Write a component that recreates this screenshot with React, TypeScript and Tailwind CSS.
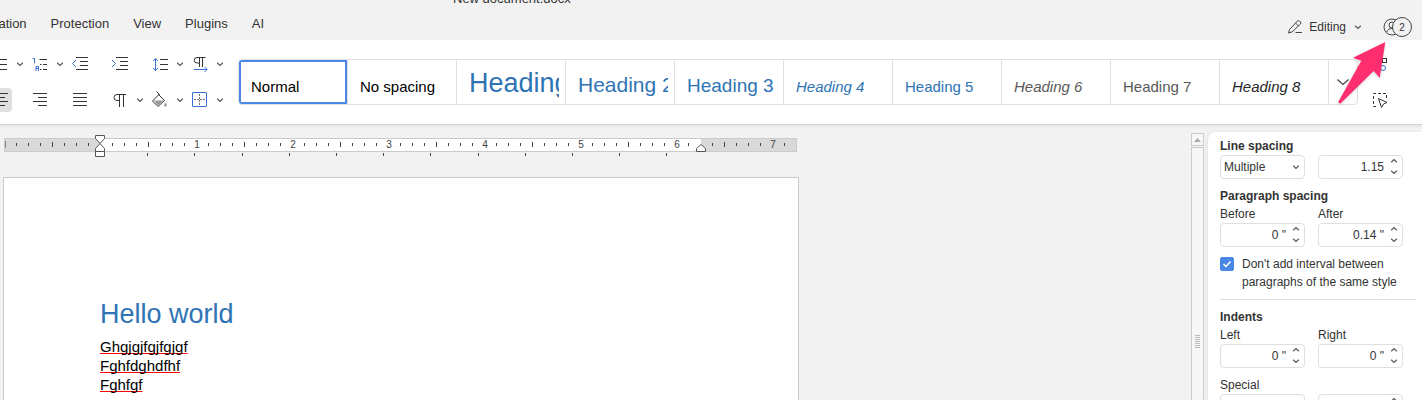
import { useState } from "react";

const TABS = ["Collaboration", "Protection", "View", "Plugins", "AI"];

const STYLES = [
  { name: "Normal", className: "text-[15px] text-black" },
  { name: "No spacing", className: "text-[15px] text-black" },
  { name: "Heading 1", className: "text-[27px] text-[#2e74b5]" },
  { name: "Heading 2", className: "text-[21px] text-[#2e74b5]" },
  { name: "Heading 3", className: "text-[19px] text-[#2e74b5]" },
  { name: "Heading 4", className: "text-[15px] text-[#2e74b5] italic" },
  { name: "Heading 5", className: "text-[15px] text-[#2e74b5]" },
  { name: "Heading 6", className: "text-[15px] text-[#595959] italic" },
  { name: "Heading 7", className: "text-[15px] text-[#595959]" },
  { name: "Heading 8", className: "text-[15px] text-[#272727] italic" },
];

const DARK = "#333";
const BLUE = "#3b6fd1";

const Chevron = ({ up = false }: { up?: boolean }) => (
  <svg width="8" height="6" viewBox="0 0 8 6" fill="none" stroke="#555" strokeWidth="1.2">
    <path d={up ? "M1.2 4.2 4 1.6l2.8 2.6" : "M1.2 1.8 4 4.4l2.8-2.6"} />
  </svg>
);

const Icon = ({ children }: { children: React.ReactNode }) => (
  <svg width="20" height="20" viewBox="0 0 20 20" fill="none" stroke={DARK}>
    {children}
  </svg>
);

const ToolButton = ({
  label,
  active = false,
  className = "",
  children,
}: {
  label: string;
  active?: boolean;
  className?: string;
  children: React.ReactNode;
}) => (
  <button
    aria-label={label}
    className={`flex h-6 items-center justify-center rounded-sm ${active ? "bg-[#e0e0e0]" : ""} ${className}`}
  >
    {children}
  </button>
);

const ListTools = () => (
  <div className="-ml-[10px] grid w-60 shrink-0 grid-cols-12 gap-y-3">
    <ToolButton label="Numbering">
      <Icon>
        <path d="M8 5.5h9M8 10.5h9M8 15.5h9" />
      </Icon>
    </ToolButton>
    <ToolButton label="Numbering options">
      <Chevron />
    </ToolButton>
    <ToolButton label="Multilevel list">
      <Icon>
        <path d="M9.5 5.5H17M10 10.5h1.5M13 10.5h4M10 15.5h1.5M13 15.5h4" />
        <path stroke={BLUE} d="M2.5 4.5h2v5M6 17v-4.500h2.500V17M6 14.500h2.500" />
      </Icon>
    </ToolButton>
    <ToolButton label="Multilevel list options">
      <Chevron />
    </ToolButton>
    <ToolButton label="Decrease indent">
      <Icon>
        <path d="M6 3.5h12M10 7.500h8M10 11.500h8M6 15.500h12" />
        <path stroke={BLUE} d="M6 6 2.500 9.500 6 13" />
      </Icon>
    </ToolButton>
    <ToolButton label="Increase indent" className="col-start-7">
      <Icon>
        <path d="M6 3.5h12M10 7.500h8M10 11.500h8M6 15.500h12" />
        <path stroke={BLUE} d="M2 6 5.500 9.500 2 13" />
      </Icon>
    </ToolButton>
    <ToolButton label="Line spacing" className="col-start-9">
      <Icon>
        <path d="M10 5.500h8M10 10.500h8M10 15.500h8" />
        <path stroke={BLUE} d="M5.500 4.500v12M3 7l2.500-2.500L8 7M3 14l2.500 2.500L8 14" />
      </Icon>
    </ToolButton>
    <ToolButton label="Line spacing options">
      <Chevron />
    </ToolButton>
    <ToolButton label="Text direction">
      <Icon>
        <path d="M15.500 3.500H7a2.700 2.700 0 0 0 0 5.500h2.500M9.500 3.500v9.500M12.500 3.500v9.500" />
        <path stroke={BLUE} d="M4 15.500h13M14.500 13l2.500 2.500-2.500 2.500" />
      </Icon>
    </ToolButton>
    <ToolButton label="Text direction options">
      <Chevron />
    </ToolButton>

    <ToolButton label="Align center" active className="col-start-1 w-[22px]">
      <Icon>
        <path d="M3 3.500h14M6 7.500h8M3 11.500h14M6 15.500h8" />
      </Icon>
    </ToolButton>
    <ToolButton label="Align right" className="col-start-3">
      <Icon>
        <path d="M3 3.500h14M8 7.500h9M3 11.500h14M8 15.500h9" />
      </Icon>
    </ToolButton>
    <ToolButton label="Justify" className="col-start-5">
      <Icon>
        <path d="M3 3.500h14M3 7.500h14M3 11.500h14M3 15.500h14" />
      </Icon>
    </ToolButton>
    <ToolButton label="Nonprinting characters" className="col-start-7">
      <Icon>
        <path d="M16 4.500H7a3 3 0 0 0 0 6h2.500M9.500 4.500V17M13.500 4.500V17" />
      </Icon>
    </ToolButton>
    <ToolButton label="Nonprinting options">
      <Chevron />
    </ToolButton>
    <ToolButton label="Shading">
      <Icon>
        <path d="m8.500 4.500 6 6-6.500 6-5.500-5.500 7-7M6.500 1.500l3 3" />
        <path fill="#999" stroke="none" d="M4 10.500h9.500L8 15.800z" />
        <path fill="#999" stroke="none" d="M15.500 12.500c2 2.500 1.500 4 0 4s-2-1.500 0-4z" />
      </Icon>
    </ToolButton>
    <ToolButton label="Shading options">
      <Chevron />
    </ToolButton>
    <ToolButton label="Borders">
      <Icon>
        <path stroke="#777" strokeDasharray="2 1" d="M9.500 4v12M4 9.500h12" />
        <rect x="2.500" y="2.500" width="14" height="14" rx=".5" stroke={BLUE} />
      </Icon>
    </ToolButton>
    <ToolButton label="Borders options">
      <Chevron />
    </ToolButton>
  </div>
);

const StyleGallery = () => {
  const [selected, setSelected] = useState("Normal");

  return (
    <div className="mt-[19px] ml-2 flex h-[46px] min-w-0 flex-1 overflow-hidden rounded border border-[#dfdfdf]">
      {STYLES.map((style) => (
        <button
          key={style.name}
          onClick={() => setSelected(style.name)}
          className={`w-[109px] shrink-0 border-r border-[#dfdfdf] pr-[6px] pl-3 text-left ${
            selected === style.name ? "shadow-[inset_0_0_0_2px_#4a87e7]" : ""
          }`}
        >
          <span className={`flex h-11 items-baseline overflow-hidden whitespace-nowrap ${style.className}`}>
            {/* shared baseline for every preview size */}
            <span className="inline-block h-8 w-0" />
            {style.name}
          </span>
        </button>
      ))}
      <button aria-label="More styles" className="flex flex-1 items-center justify-center">
        <svg width="14" height="8" viewBox="0 0 14 8" fill="none" stroke="#444" strokeWidth="1.2">
          <path d="m1.500 1.500 5.500 5 5.500-5" />
        </svg>
      </button>
    </div>
  );
};

const Header = () => (
  <header className="flex h-10 shrink-0 flex-col text-[#333]">
    <div className="-mt-[10px] ml-[453px] h-5 text-[13px] leading-[18px]">New document.docx</div>
    <div className="flex h-[30px] items-center justify-between">
      <nav className="-ml-[50px] flex gap-6 pb-[2px] text-[13px] leading-5">
        {TABS.map((tab) => (
          <button key={tab}>{tab}</button>
        ))}
      </nav>
      <div className="flex items-center pt-1 pr-[10px] text-xs leading-5">
        <button className="mr-5 flex items-center">
          <svg width="16" height="16" viewBox="0 0 16 16" fill="none" stroke="#444" className="mr-[6px]">
            <path d="M1.500 14 2.500 10.500l8-8.500a1.500 1.500 0 0 1 2 0l1 1a1.500 1.500 0 0 1 0 2L5 13zM8.500 4l3 3M8.500 13.500H15" />
          </svg>
          Editing
          <span className="ml-2">
            <Chevron />
          </span>
        </button>
        <button aria-label="2 users" className="h-5">
          <svg width="30" height="20" viewBox="0 0 30 20" fill="none" stroke="#444">
            <circle cx="10" cy="10" r="8" />
            <circle cx="10" cy="8" r="3" />
            <path d="M4.500 15.500c1-3 3-4 5.500-4s4.500 1 5.500 4" />
            <circle cx="20" cy="10" r="9.500" fill="#f2f2f2" />
            <text x="20" y="13.500" textAnchor="middle" fontSize="10" fill="#333" stroke="none">
              2
            </text>
          </svg>
        </button>
      </div>
    </div>
  </header>
);

const Toolbar = () => (
  <div className="flex h-[85px] shrink-0 border-b border-[#d3d3d3] bg-white shadow-[0_2px_2px_rgba(0,0,0,0.05)]">
    <div className="pt-3">
      <ListTools />
    </div>
    <StyleGallery />
    <div className="flex w-16 shrink-0 flex-col items-start gap-y-3 pt-3 pl-3">
      <ToolButton label="Arrange">
        <Icon>
          <rect x="3.500" y="7.500" width="5" height="5" />
          <rect x="12.500" y="4.500" width="4" height="4" />
          <circle cx="13" cy="14" r="2.500" stroke={BLUE} />
        </Icon>
      </ToolButton>
      <ToolButton label="Select">
        <Icon>
          <path strokeDasharray="3 2" d="M16.500 8V3.500h-13v13H7" />
          <path fill="white" d="m8.500 8.500 8.500 4-3.500 1.500-2 3.500z" />
        </Icon>
      </ToolButton>
    </div>
  </div>
);

const Ruler = () => {
  const ticks = Array.from({ length: 65 }, (_, i) => i - 7);
  const tabStops = Array.from({ length: 12 }, (_, i) => Math.floor(147.6 + 47.2 * i));

  return (
    <svg width="800" height="26" viewBox="0 0 800 26" className="shrink-0">
      <rect x="4.500" y="6.500" width="792" height="13" fill="#d9d9d9" stroke="#cbcbcb" />
      <rect x="100" y="7" width="601" height="12" fill="white" />
      <rect x="5" y="9" width="1" height="7" fill="#888" />
      {ticks.map((t) => {
        const x = 100 + t * 12;
        if (t === 0 || t === 50 || x > 790) return null;
        if (t % 8 === 0) {
          return (
            <text key={t} x={x + 1} y="16" textAnchor="middle" fontSize="10" fill="#444">
              {t / 8}
            </text>
          );
        }
        const tall = t % 4 === 0;
        return <rect key={t} x={x} y={tall ? 10 : 11} width="1" height={tall ? 5 : 3} fill="#444" />;
      })}
      {tabStops.map((x) => (
        <rect key={x} x={x} y="21" width="1" height="3" fill="#444" />
      ))}
      <g fill="white" stroke="#555">
        <path d="M95.500 3.500h9v3l-4.500 5-4.500-5z" />
        <path d="M95.500 19.500v-3l4.500-5 4.500 5v3zM95.500 19.500h9v5h-9z" />
        <path d="M696.500 19.500v-3l4.500-4 4.500 4v3z" />
      </g>
    </svg>
  );
};

const Document = () => (
  <div className="flex min-w-0 flex-1 flex-col overflow-hidden pt-[7px]">
    <Ruler />
    <article className="mt-[19px] ml-[3px] w-[796px] flex-1 border border-b-0 border-[#c9c9c9] bg-white pt-[120px] pl-24 text-black">
      <h1 className="text-[27px] leading-8 text-[#2e74b5]">Hello world</h1>
      <div className="mt-[7px] text-[15px] leading-[19px] [text-decoration-skip-ink:none]">
        <p className="[text-decoration:underline_1px_#f00]">Ghgjgjfgjfgjgf</p>
        <p className="[text-decoration:underline_1px_#f00]">Fghfdghdfhf</p>
        <p className="[text-decoration:underline_1px_#f00]">Fghfgf</p>
      </div>
    </article>
  </div>
);

const ScrollBar = () => (
  <div className="mr-1 flex w-[13px] shrink-0 flex-col gap-px pt-2">
    <button
      aria-label="Scroll up"
      className="flex h-[13px] items-center justify-center border border-[#cbcbcb] bg-[#f7f7f7]"
    >
      <svg width="7" height="4" viewBox="0 0 7 4" fill="#aaa">
        <path d="M0 4 3.500 0 7 4z" />
      </svg>
    </button>
    <div className="flex flex-1 justify-center border-x border-t border-[#cbcbcb] bg-[#f7f7f7] pt-[187px]">
      <svg width="5" height="14" viewBox="0 0 5 14" stroke="#bbb">
        <path d="M0 .5h5M0 2.500h5M0 4.500h5M0 6.500h5M0 8.500h5M0 10.500h5M0 12.500h5" />
      </svg>
    </div>
  </div>
);

const SpinBox = ({ id, label, initial }: { id: string; label?: string; initial: string }) => {
  const [value, setValue] = useState(initial);

  return (
    <div className="flex h-6 w-[85px] rounded border border-[#dfdfdf] bg-white">
      <input
        id={id}
        aria-label={label}
        value={value}
        onChange={(e) => setValue(e.target.value)}
        className="w-0 flex-1 pr-px text-right outline-none"
      />
      <div className="flex w-[17px] flex-col justify-between py-px">
        <button aria-label="Increase" className="flex h-[7px] items-center justify-center">
          <Chevron up />
        </button>
        <button aria-label="Decrease" className="flex h-[10px] items-center justify-center">
          <Chevron />
        </button>
      </div>
    </div>
  );
};

const Field = ({ id, label, initial }: { id: string; label: string; initial: string }) => (
  <div>
    <label htmlFor={id} className="block">
      {label}
    </label>
    <SpinBox id={id} initial={initial} />
  </div>
);

const Select = ({ id, label, options }: { id: string; label?: string; options: string[] }) => (
  <div className="relative w-[85px]">
    <select
      id={id}
      aria-label={label}
      className="block h-6 w-full appearance-none rounded border border-[#dfdfdf] bg-white pl-[3px]"
    >
      {options.map((o) => (
        <option key={o}>{o}</option>
      ))}
    </select>
    <span className="pointer-events-none absolute inset-y-0 right-[5px] flex items-center">
      <Chevron />
    </span>
  </div>
);

const ParagraphPanel = () => {
  const [noInterval, setNoInterval] = useState(true);

  return (
    <aside className="mt-[7px] flex w-[214px] shrink-0 flex-col gap-2 overflow-hidden rounded-tl-lg bg-white pt-[5px] pr-[6px] pl-3 text-xs leading-[18px] text-[#333] shadow-[-1px_0_3px_rgba(0,0,0,0.06)]">
      <section>
        <h2 className="font-bold">Line spacing</h2>
        <div className="flex gap-[13px]">
          <Select id="line-rule" label="Line spacing rule" options={["Multiple", "Exactly", "At least"]} />
          <SpinBox id="line-value" label="Line spacing value" initial="1.15" />
        </div>
      </section>
      <section>
        <h2 className="font-bold">Paragraph spacing</h2>
        <div className="flex gap-[13px]">
          <Field id="before" label="Before" initial={'0 "'} />
          <Field id="after" label="After" initial={'0.14 "'} />
        </div>
      </section>
      <label className="flex gap-2">
        <span className="relative mt-[2px] h-[14px] w-[14px] shrink-0">
          <input
            type="checkbox"
            checked={noInterval}
            onChange={(e) => setNoInterval(e.target.checked)}
            className="block h-full w-full appearance-none rounded-xs border border-[#c0c0c0] checked:border-[#4a87e7] checked:bg-[#4a87e7]"
          />
          <svg
            viewBox="0 0 14 14"
            fill="none"
            stroke="white"
            strokeWidth="1.500"
            className="pointer-events-none absolute inset-0"
          >
            <path d="m3.500 7 2.500 2.500 4.500-5" />
          </svg>
        </span>
        Don't add interval between paragraphs of the same style
      </label>
      <hr className="border-[#dfdfdf]" />
      <section>
        <h2 className="font-bold">Indents</h2>
        <div className="flex gap-[13px]">
          <Field id="left" label="Left" initial={'0 "'} />
          <Field id="right" label="Right" initial={'0 "'} />
        </div>
      </section>
      <section>
        <label htmlFor="special" className="block">
          Special
        </label>
        <div className="flex gap-[13px]">
          <Select id="special" options={["(none)", "First line", "Hanging"]} />
          <SpinBox id="special-value" label="Special indent value" initial={'0 "'} />
        </div>
      </section>
    </aside>
  );
};

const App = () => (
  <div className="relative flex h-screen flex-col overflow-hidden bg-[#f2f2f2] font-['Liberation_Sans',Arial,sans-serif]">
    <Header />
    <Toolbar />
    <div className="flex min-h-0 flex-1">
      <Document />
      <ScrollBar />
      <ParagraphPanel />
    </div>
    {/* pointer to the list of users */}
    <svg
      width="56"
      height="70"
      viewBox="0 0 56 70"
      className="pointer-events-none absolute top-[38px] right-[32px] drop-shadow"
    >
      <path fill="#ff2e6e" d="M51.300 4 19 19.800l8.300 3L4.500 63.500c-.5 1.500 1 2.500 2.500 1.500L39.700 33l6 7z" />
    </svg>
  </div>
);

export default App;
